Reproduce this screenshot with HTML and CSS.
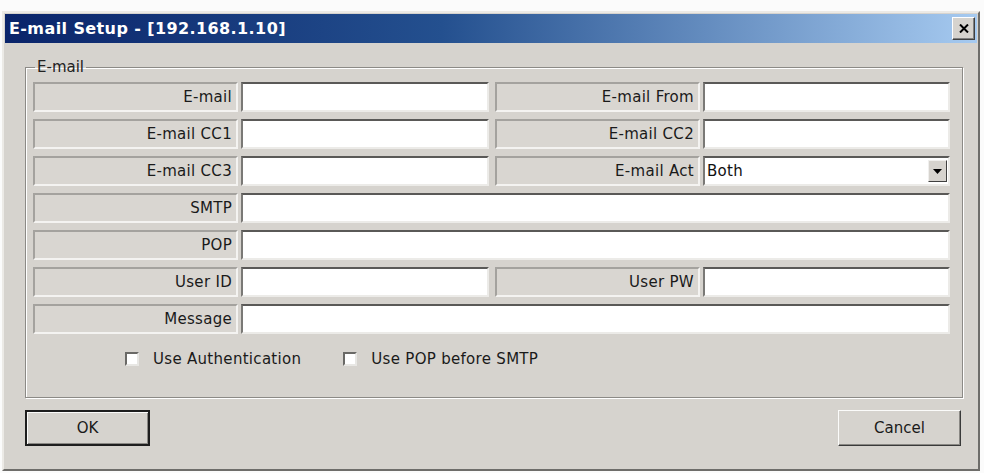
FILE: index.html
```html
<!DOCTYPE html>
<html>
<head>
<meta charset="utf-8">
<link rel="stylesheet" href="styles.css">
</head>
<body>
<div class="window">
  <div class="titlebar">
    <span class="title">E-mail Setup - [192.168.1.10]</span>
    <span class="close"><svg width="10" height="9" viewBox="0 0 10 9"><path d="M1 0.5 L9 8.5 M9 0.5 L1 8.5" stroke="#000" stroke-width="2"/></svg></span>
  </div>
  <div class="content">
    <fieldset class="group">
      <legend>E-mail</legend>
      <div class="grid">
        <div class="lbl">E-mail</div><div class="inp"></div>
        <div class="lbl r">E-mail From</div><div class="inp"></div>

        <div class="lbl">E-mail CC1</div><div class="inp"></div>
        <div class="lbl r">E-mail CC2</div><div class="inp"></div>

        <div class="lbl">E-mail CC3</div><div class="inp"></div>
        <div class="lbl r">E-mail Act</div>
        <div class="inp select"><span class="val">Both</span><span class="drop"><svg width="9" height="5" viewBox="0 0 9 5"><path d="M0 0 H9 L4.5 5 Z" fill="#000"/></svg></span></div>

        <div class="lbl">SMTP</div><div class="inp wide"></div>

        <div class="lbl">POP</div><div class="inp wide"></div>

        <div class="lbl">User ID</div><div class="inp"></div>
        <div class="lbl r">User PW</div><div class="inp"></div>

        <div class="lbl">Message</div><div class="inp wide"></div>
      </div>
      <div class="checks">
        <label class="chk"><span class="box"></span>Use Authentication</label>
        <label class="chk"><span class="box"></span>Use POP before SMTP</label>
      </div>
    </fieldset>
    <div class="buttons">
      <div class="btn default">OK</div>
      <div class="btn">Cancel</div>
    </div>
  </div>
</div>
</body>
</html>
```
FILE: styles.css
```css
html, body {
  margin: 0;
  padding: 0;
  background: #fbfbfb;
}
body {
  font-family: "DejaVu Sans", "Liberation Sans", sans-serif;
  font-size: 13px;
  color: #111;
}
.window {
  box-sizing: border-box;
  width: 978px;
  height: 460px;
  margin: 11px 0 0 2px;
  background: #d6d3ce;
  border: 2px solid;
  border-color: #eceae6 #6e6d6a #6e6d6a #eceae6;
  padding: 1px;
  display: flex;
  flex-direction: column;
}
.titlebar {
  height: 29px;
  background: linear-gradient(to right, #0a246a 0%, #24508f 45%, #a6caf0 100%);
  display: flex;
  align-items: center;
  justify-content: space-between;
  padding: 0 2px 0 4px;
}
.title {
  color: #fff;
  font-weight: bold;
  font-size: 16px;
  letter-spacing: 0.4px;
}
.close {
  box-sizing: border-box;
  width: 23px;
  height: 23px;
  background: #d6d3ce;
  border: 1px solid;
  border-color: #fff #404040 #404040 #fff;
  box-shadow: inset -1px -1px 0 #808080;
  display: flex;
  align-items: center;
  justify-content: center;
}
.content {
  flex: 1;
  display: flex;
  flex-direction: column;
  padding: 15px 14px 0 20px;
}
.group {
  margin: 0;
  height: 340px;
  box-sizing: border-box;
  border: 1px solid #8c8a86;
  box-shadow: 1px 1px 0 #fff, inset 1px 1px 0 #fff;
  padding: 6px 7px 0 7px;
  display: flex;
  flex-direction: column;
}
.group legend {
  padding: 0 2px;
  margin-left: 2px;
  font-size: 15px;
  color: #222;
}
.grid {
  display: grid;
  grid-template-columns: 205px 248px 208px 247px;
  column-gap: 3px;
  row-gap: 7px;
  grid-auto-rows: 30px;
}
.lbl.r { margin-left: 3px; }
.lbl {
  box-sizing: border-box;
  border: 2px solid;
  border-color: #a4a29e #f4f3f1 #f4f3f1 #a4a29e;
  background: #d9d6d1;
  text-align: right;
  padding-right: 4px;
  font-size: 15px;
  letter-spacing: 0.3px;
  line-height: 26px;
  color: #1a1a1a;
  white-space: nowrap;
}
.inp {
  box-sizing: border-box;
  background: #fff;
  border: 2px solid;
  border-color: #5a5957 #ecebe8 #ecebe8 #7a7976;
}
.inp.wide {
  grid-column: 2 / 5;
}
.select {
  display: flex;
  align-items: center;
  justify-content: space-between;
  padding: 0 1px 0 2px;
}
.select .val {
  font-size: 15px;
  letter-spacing: 0.3px;
  color: #111;
}
.drop {
  box-sizing: border-box;
  width: 19px;
  height: 22px;
  background: #d6d3ce;
  border: 1px solid;
  border-color: #f0efed #404040 #404040 #f0efed;
  display: flex;
  align-items: center;
  justify-content: center;
}
.checks {
  display: flex;
  align-items: center;
  gap: 42px;
  padding: 16px 0 0 92px;
}
.chk {
  display: flex;
  align-items: center;
  gap: 14px;
  font-size: 15px;
  letter-spacing: 0.3px;
  color: #1a1a1a;
}
.box {
  box-sizing: border-box;
  width: 14px;
  height: 14px;
  background: #fff;
  border: 2px solid;
  border-color: #6a6966 #e8e7e4 #e8e7e4 #6a6966;
}
.buttons {
  display: flex;
  justify-content: space-between;
  padding: 12px 2px 0 0;
}
.btn {
  box-sizing: border-box;
  width: 123px;
  height: 36px;
  display: flex;
  align-items: center;
  justify-content: center;
  font-size: 15px;
  color: #1a1a1a;
  background: #d6d3ce;
  border: 1px solid;
  border-color: #fbfbfa #3a3a3a #3a3a3a #fbfbfa;
  box-shadow: inset -1px -1px 0 #8a8884;
}
.btn.default {
  width: 125px;
  border: 2px solid #1e1e1e;
  box-shadow: inset 1px 1px 0 #fbfbfa, inset -1px -1px 0 #8a8884;
}
```
